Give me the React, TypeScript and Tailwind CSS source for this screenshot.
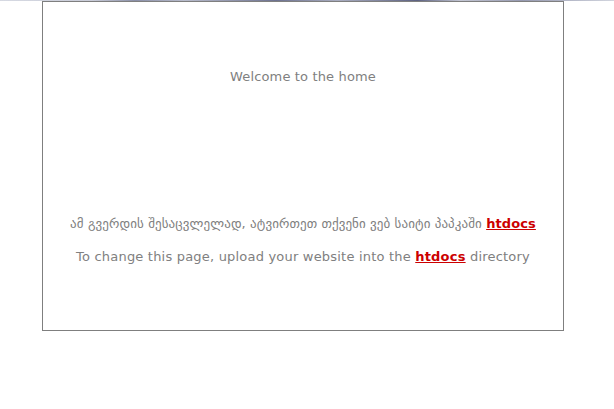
export default function App() {
  const font = { fontFamily: '"DejaVu Sans", Verdana, sans-serif' };
  return (
    <div className="w-[614px] h-[409px] bg-white relative overflow-hidden" style={font}>
      <div className="h-[1px] w-full bg-[linear-gradient(90deg,#d6d9e2_0%,#c9ccd8_15%,#8a8fa8_22%,#b8bccc_30%,#6d7290_45%,#a9adc0_55%,#5d6282_68%,#c3c6d3_75%,#9599b0_85%,#d2d5de_100%)]" />
      <div className="ml-[42px] w-[522px] h-[330px] border border-[#7f7f7f] flex flex-col items-center text-[13px] text-[#808080]">
        <div className="mt-[67px] leading-[16px] tracking-[0.15px]">Welcome to the home</div>
        <div className="mt-[131px] leading-[16px] tracking-[0.1px]">
          ამ გვერდის შესაცვლელად, ატვირთეთ თქვენი ვებ საიტი პაპკაში{" "}
          <a href="#" className="font-bold text-[#cc0000] underline">htdocs</a>
        </div>
        <div className="mt-[17px] leading-[16px] tracking-[0.2px]">
          To change this page, upload your website into the{" "}
          <a href="#" className="font-bold text-[#cc0000] underline">htdocs</a> directory
        </div>
      </div>
    </div>
  );
}
